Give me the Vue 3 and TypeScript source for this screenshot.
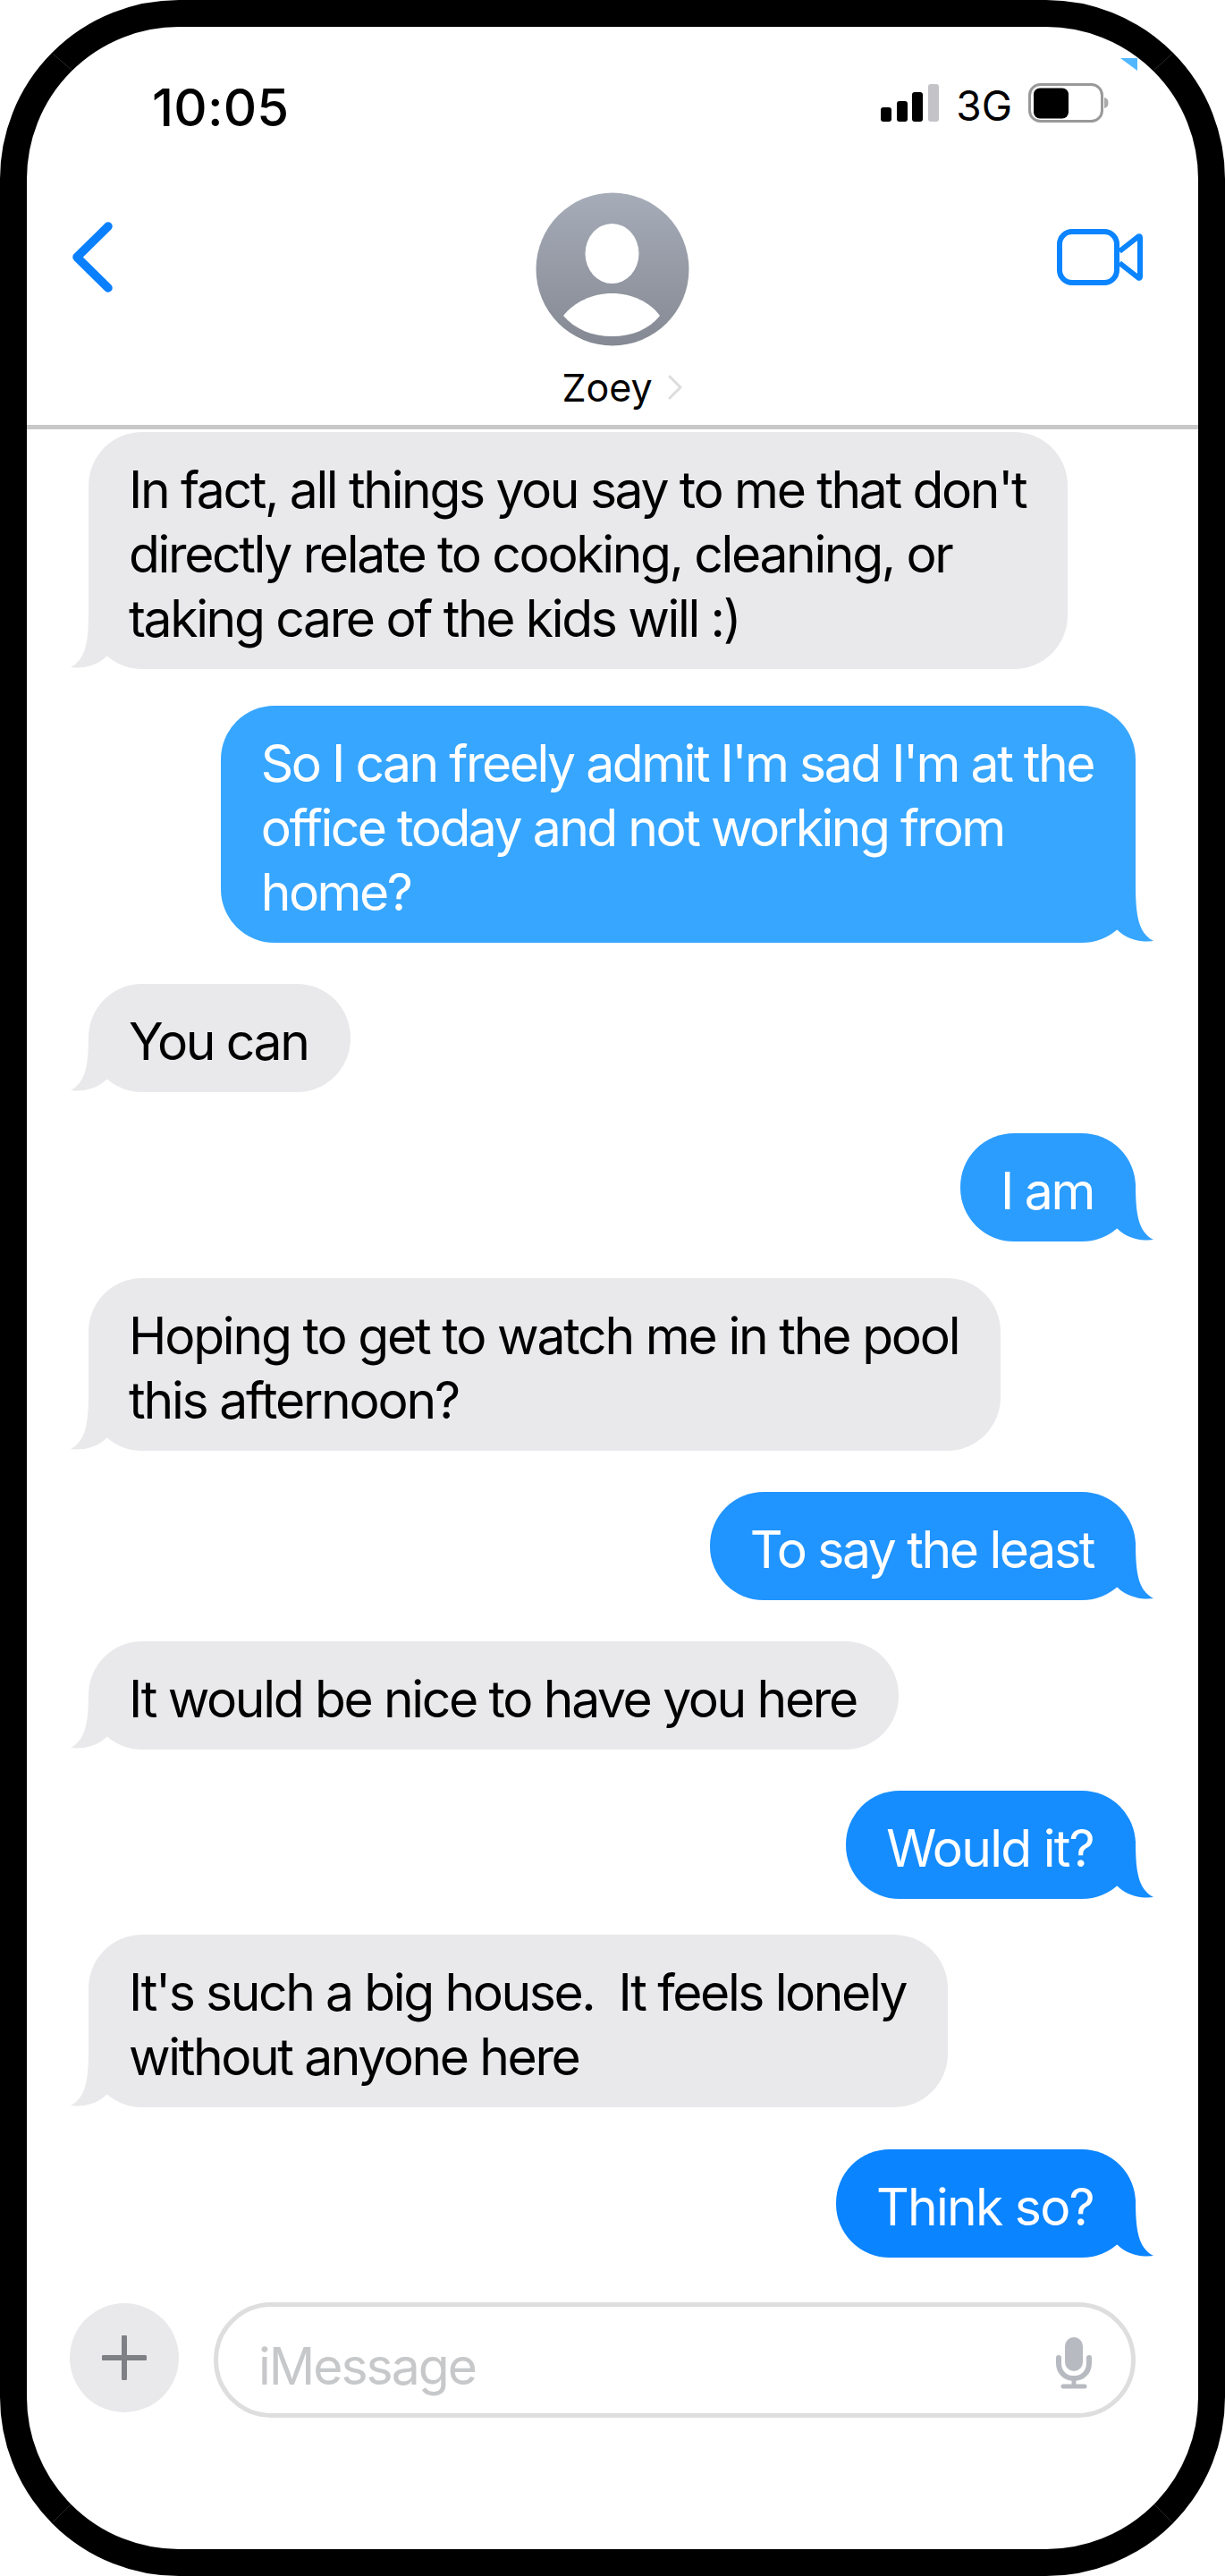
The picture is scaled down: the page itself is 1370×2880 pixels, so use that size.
<script setup lang="ts">
interface Message {
  text: string
  mine: boolean
  gap: number
  color?: string
  track?: number
}

// explicit line breaks so wrapping stays the same as the screenshot
const messages: Message[] = [
  { text: "In fact, all things you say to me that don't\ndirectly relate to cooking, cleaning, or\ntaking care of the kids will :)", mine: false, gap: 0 },
  { text: "So I can freely admit I'm sad I'm at the\noffice today and not working from\nhome?", mine: true, gap: 41, color: '#37a6ff', track: -2.48 },
  { text: 'You can', mine: false, gap: 46 },
  { text: 'I am', mine: true, gap: 46, color: '#2b9dff' },
  { text: 'Hoping to get to watch me in the pool\nthis afternoon?', mine: false, gap: 41, track: -2.2 },
  { text: 'To say the least', mine: true, gap: 46, color: '#2094ff' },
  { text: 'It would be nice to have you here', mine: false, gap: 46 },
  { text: 'Would it?', mine: true, gap: 46, color: '#158dff', track: -1.75 },
  { text: "It's such a big house.  It feels lonely\nwithout anyone here", mine: false, gap: 40, track: -2.4 },
  { text: 'Think so?', mine: true, gap: 47, color: '#0a84ff', track: -1.75 }
]
</script>

<template>
  <div class="phone">
    <div class="screen">
      <div class="status-bar">
        <span class="time">10:05</span>
        <div class="status-icons">
          <svg class="signal" width="65" height="42" viewBox="0 0 65 42">
            <rect x="0" y="26" width="12" height="16" rx="3" fill="#000" />
            <rect x="18" y="19" width="12" height="23" rx="3" fill="#000" />
            <rect x="35" y="9" width="12" height="33" rx="3" fill="#000" />
            <rect x="53" y="0" width="12" height="42" rx="3" fill="#c3c3c8" />
          </svg>
          <span class="network">3G</span>
          <svg class="battery" width="90" height="44" viewBox="0 0 90 44">
            <rect x="1.5" y="1.5" width="81" height="41" rx="12" fill="none" stroke="#999" stroke-width="3" />
            <rect x="6" y="5.500" width="39" height="34" rx="7" fill="#000" />
            <path d="M85 16c3 .5 4.500 3 4.500 6s-1.500 5.500-4.500 6z" fill="#aaa" />
          </svg>
        </div>
      </div>

      <div class="nav">
        <svg class="back" width="60" height="90" viewBox="0 0 60 90">
          <path d="M47 10 12 44.500 47 79" fill="none" stroke="#0a80ff" stroke-width="9.500" stroke-linecap="round" stroke-linejoin="round" />
        </svg>
        <div class="contact">
          <svg width="172" height="172" viewBox="0 0 172 172">
            <defs>
              <linearGradient id="avatarFill" x1="0" y1="0" x2="0" y2="1">
                <stop offset="0" stop-color="#a6acb8" />
                <stop offset="1" stop-color="#858993" />
              </linearGradient>
            </defs>
            <circle cx="86" cy="86" r="85.500" fill="url(#avatarFill)" />
            <ellipse cx="85.500" cy="68.500" rx="30" ry="33.500" fill="#fff" />
            <path d="M31 138C43 123 63 113 85.500 113S128 123 139 138C127 153 108 161 85.500 161S44 153 31 138Z" fill="#fff" />
          </svg>
          <div class="name-row">
            <span class="name">Zoey</span>
            <svg width="16" height="28" viewBox="0 0 16 28">
              <path d="M2 2 14 14 2 26" fill="none" stroke="#ddd" stroke-width="3" stroke-linecap="round" stroke-linejoin="round" />
            </svg>
          </div>
        </div>
        <svg class="video" width="96" height="63" viewBox="0 0 96 63">
          <rect x="3" y="3" width="64" height="57" rx="14" fill="none" stroke="#0a84ff" stroke-width="6" />
          <path d="M70 25 91 8.500c1-.7 2-.2 2 1v44c0 1.200-1 1.700-2 1L70 38" fill="none" stroke="#0a84ff" stroke-width="6" stroke-linejoin="round" />
        </svg>
      </div>

      <div class="thread">
        <div
          v-for="(m, i) in messages"
          :key="i"
          class="bubble"
          :class="m.mine ? 'mine' : 'theirs'"
          :style="{ marginTop: m.gap + 'px', '--bubble': m.color, letterSpacing: m.track ? m.track + 'px' : undefined }"
        >
          <span class="text">{{ m.text }}</span>
          <svg class="tail" width="60" height="70" viewBox="0 0 60 70">
            <path d="M40 5C40 40 43 59 60 68C50 69.500 32 68 20 56L0 40V5Z" />
          </svg>
        </div>
      </div>

      <div class="composer">
        <div class="add">
          <svg width="50" height="50" viewBox="0 0 50 50">
            <path d="M2 25H48M25 2V48" fill="none" stroke="#7f8085" stroke-width="6" stroke-linecap="round" />
          </svg>
        </div>
        <div class="input">
          <span class="placeholder">iMessage</span>
          <svg width="40" height="58" viewBox="0 0 40 58">
            <rect x="10" y="0" width="20" height="38" rx="10" fill="#b8bac1" />
            <path d="M3 23V29C3 39 10 46 20 46S37 39 37 29V23" fill="none" stroke="#b8bac1" stroke-width="6" stroke-linecap="round" />
            <path d="M20 46V55M8 55H32" fill="none" stroke="#b8bac1" stroke-width="5" stroke-linecap="round" />
          </svg>
        </div>
      </div>

      <div class="sensor" />
    </div>

    <!-- hairline seams across the frame corners -->
    <svg class="seams" width="1370" height="2880" viewBox="0 0 1370 2880">
      <path d="M59 60 80 78M1311 60 1291 78M59 2820 79 2800M1311 2820 1291 2800" fill="none" stroke="#3a3a3a" stroke-width="0.7" />
    </svg>
  </div>
</template>

<style scoped>
.phone {
  position: relative;
  width: 1370px;
  height: 2880px;
  box-sizing: border-box;
  border: 30px solid #000;
  border-radius: 200px;
  background: #fff;
  font-family: Inter, "Liberation Sans", sans-serif;
  color: #000;
}

.screen {
  position: relative;
  display: flex;
  flex-direction: column;
  height: 100%;
}

.status-bar {
  display: flex;
  justify-content: space-between;
  align-items: flex-start;
  height: 115px;
  padding: 55px 100px 0 140px;
  box-sizing: content-box;
}

.time {
  font-size: 58px;
  font-weight: 500;
  line-height: 70px;
  letter-spacing: 0.2px;
}

.status-icons {
  display: flex;
  align-items: flex-start;
  margin-top: 8px;
}

.signal {
  margin-top: 1px;
}

.network {
  margin: 0 18px 0 19px;
  font-size: 46px;
  line-height: 50px;
}

.nav {
  display: grid;
  grid-template-columns: 1fr auto 1fr;
  align-items: start;
  height: 275px;
  padding: 0 62px;
  border-bottom: 5px solid #c8c8c8;
}

.back {
  margin: 43px 0 0 -18px;
}

.video {
  justify-self: end;
  margin-top: 56px;
}

.contact {
  display: flex;
  flex-direction: column;
  align-items: center;
  padding-top: 15px;
}

.name-row {
  display: flex;
  align-items: center;
  gap: 17px;
  margin-top: 20px;
  padding-left: 21px;
}

.name {
  font-size: 43px;
  line-height: 52px;
}

.thread {
  display: flex;
  flex-direction: column;
  padding: 3px 70px 0 69px;
}

.bubble {
  position: relative;
  box-sizing: border-box;
  padding: 29px 47px 20px 45px;
  border-radius: 60px;
  font-size: 57px;
  line-height: 72px;
  letter-spacing: -2.35px;
}

.text {
  white-space: pre-wrap;
}

.theirs {
  align-self: flex-start;
  background: #e9e9eb;
}

.mine {
  align-self: flex-end;
  background: var(--bubble);
  color: #fff;
}

.tail {
  position: absolute;
  bottom: 0;
}

.mine .tail {
  right: -20px;
  fill: var(--bubble);
}

.theirs .tail {
  left: -20px;
  fill: #e9e9eb;
  transform: scaleX(-1);
}

.composer {
  display: flex;
  align-items: flex-start;
  gap: 39px;
  margin-top: 50px;
  padding: 0 70px 0 48px;
}

.add {
  display: flex;
  flex: none;
  align-items: center;
  justify-content: center;
  width: 122px;
  height: 122px;
  margin-top: 1px;
  border-radius: 50%;
  background: #e9e9eb;
}

.input {
  display: flex;
  flex: 1;
  align-items: center;
  justify-content: space-between;
  height: 129px;
  box-sizing: border-box;
  padding: 0 44px 0 45px;
  border: 5px solid #dedede;
  border-radius: 65px;
}

.placeholder {
  padding-top: 14px;
  font-size: 57px;
  line-height: 72px;
  letter-spacing: -2px;
  color: #c7c8ca;
}

.input svg {
  margin-top: 6px;
}

.sensor {
  position: absolute;
  top: 35px;
  right: 68px;
  width: 0;
  height: 0;
  border-top: 14px solid #51b8ff;
  border-left: 19px solid transparent;
}

.seams {
  position: absolute;
  top: -30px;
  left: -30px;
  pointer-events: none;
}
</style>

<style>
body {
  background: #fff;
}
</style>
